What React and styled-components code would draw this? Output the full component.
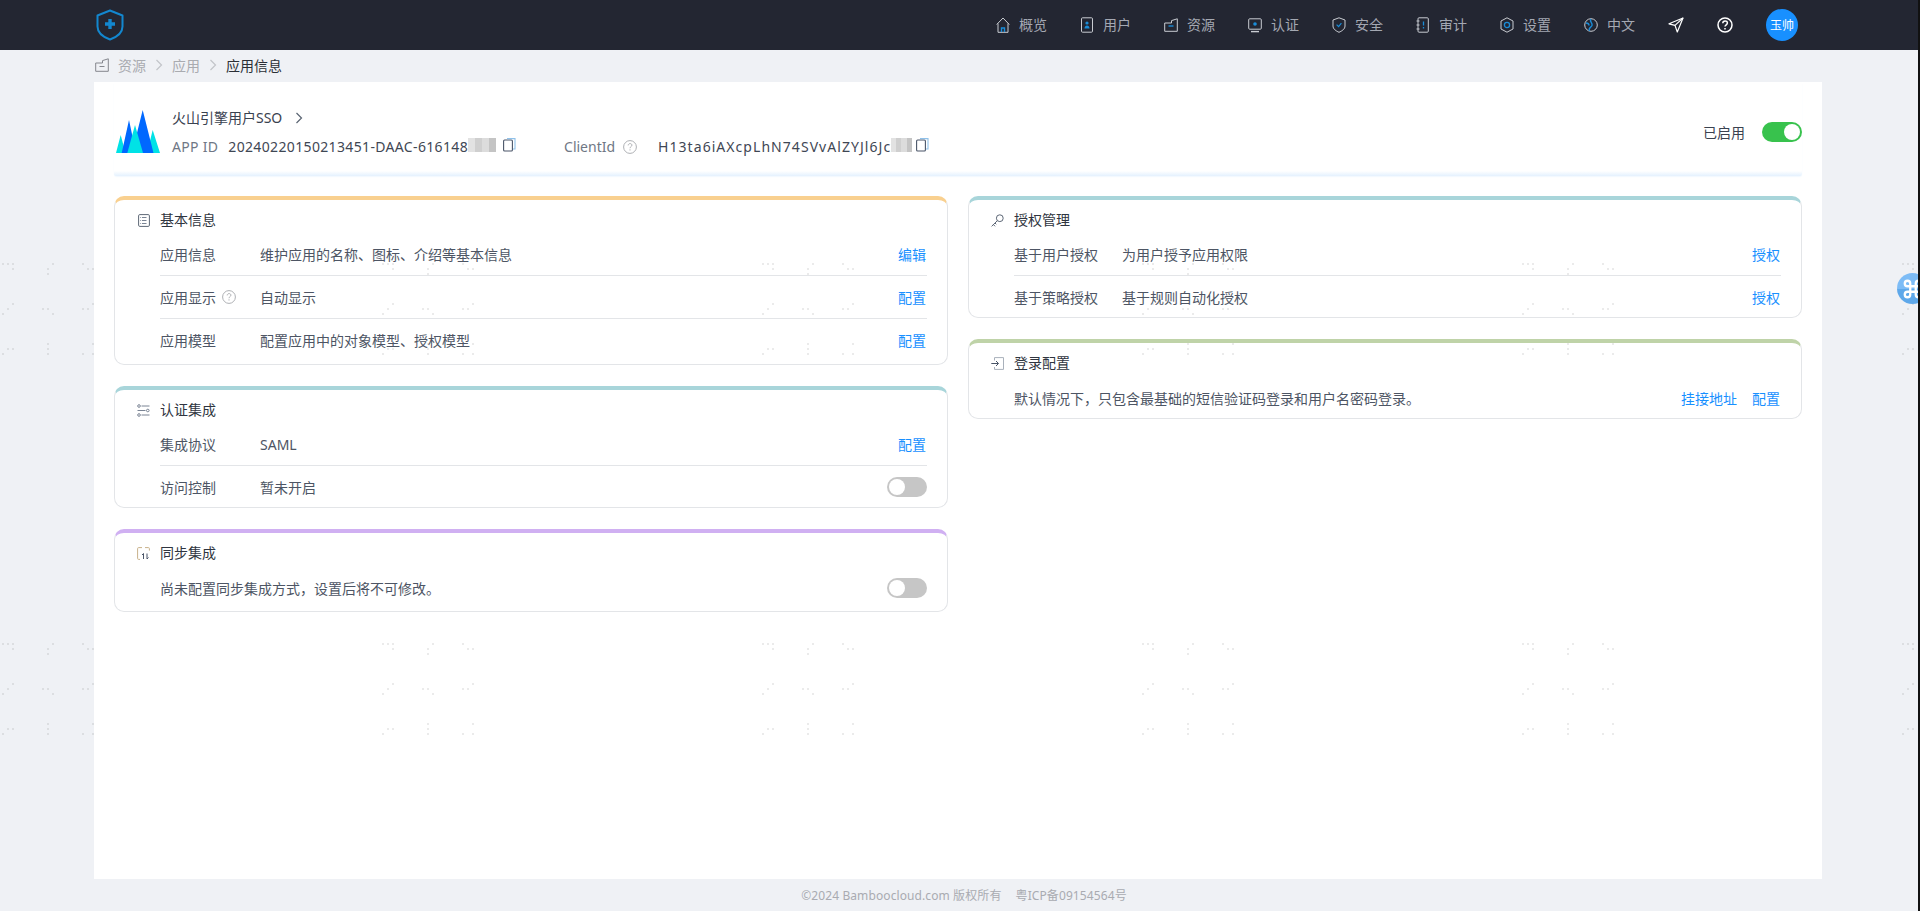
import React from "react";
import styled, { createGlobalStyle } from "styled-components";
import { Command } from "lucide-react";

const FONT = `"Noto Sans", "Noto Sans CJK SC", sans-serif`;
const LINE = "#c9ccd2";
const CORE = "#1a8cd8";

const GlobalStyle = createGlobalStyle`
  html, body {
    margin: 0;
    padding: 0;
    overflow: hidden;
    background: #eff1f5;
    font-family: ${FONT};
    font-size: 14px;
  }
`;

// nav icons, white outline with a small blue core
const HomeIcon = () => (
  <svg width="14" height="16" viewBox="0 0 14 16" fill="none" stroke={LINE}>
    <path d="M.7 7.5 7 1l6.3 6.5M2 6.5v8.8h10V6.5" />
    <path d="M5.5 15v-4h3v4" stroke={CORE} strokeWidth="1.4" />
  </svg>
);
const UserIcon = () => (
  <svg width="14" height="16" viewBox="0 0 14 16" fill="none" stroke={LINE}>
    <rect x="1.5" y=".8" width="11" height="14.4" rx="1" />
    <circle cx="7" cy="6" r="1.6" fill={CORE} stroke="none" />
    <path d="M4.5 11.5c0-4 5-4 5 0z" fill={CORE} stroke="none" />
  </svg>
);
const FolderIcon = () => (
  <svg width="14" height="14" viewBox="0 0 14 14" fill="none" stroke={LINE}>
    <path d="M.7 5v8.3h12.6V.8L7.5 2.6V5z" />
    <path d="M4.5 8h5" stroke={CORE} strokeWidth="1.4" />
  </svg>
);
const MonitorIcon = () => (
  <svg width="14" height="15" viewBox="0 0 14 15" fill="none" stroke={LINE}>
    <rect x=".7" y=".8" width="12.6" height="10.4" rx="1" />
    <path d="M3 13.6h8" strokeWidth="1.4" />
    <circle cx="7" cy="6" r="1.8" fill={CORE} stroke="none" />
  </svg>
);
const ShieldIcon = () => (
  <svg width="14" height="16" viewBox="0 0 14 16" fill="none" stroke={LINE}>
    <path d="M7 .8 13 3v6c0 3-3 5-6 6.300C4 14 1 12 1 9V3z" />
    <path d="m4.600 7.600 2 2 2.800-3.400" stroke={CORE} strokeWidth="1.2" />
  </svg>
);
const AuditIcon = () => (
  <svg width="14" height="16" viewBox="0 0 14 16" fill="none" stroke={LINE}>
    <rect x="2" y=".8" width="10.300" height="14.400" rx="1" />
    <path d="M.5 4h3M.5 8h3M.5 12h3" />
    <path d="M7.500 4.500v4M7.500 10v1.400" stroke={CORE} strokeWidth="1.300" />
  </svg>
);
const GearIcon = () => (
  <svg width="14" height="16" viewBox="0 0 14 16" fill="none" stroke={LINE}>
    <path d="M7 .8 13 4v8l-6 3.200L1 12V4z" strokeLinejoin="round" />
    <circle cx="7" cy="8" r="2.600" stroke={CORE} strokeWidth="1.300" />
  </svg>
);
const GlobeIcon = () => (
  <svg width="14" height="16" viewBox="0 0 14 16" fill="none" stroke={LINE}>
    <circle cx="7" cy="8" r="6.300" />
    <path d="M7 2c-2 3 2 4 1 6.500s-4 2-2.500 5.500M2 6c2 0 3 1 3 2.500" stroke={CORE} strokeWidth="1.400" />
  </svg>
);
const PlaneIcon = () => (
  <svg width="16" height="16" viewBox="0 0 16 16" fill="none" stroke="#fff" strokeWidth="1.200">
    <path d="M15 1 1 6.800l6 1.600L9.300 15z" strokeLinejoin="round" />
    <path d="M15 1 7 8.400" />
  </svg>
);
const HelpIcon = () => (
  <svg width="16" height="16" viewBox="0 0 16 16" fill="none" stroke="#fff" strokeWidth="1.500">
    <circle cx="8" cy="8" r="7" />
    <path d="M5.800 6.200c0-3 4.600-3 4.600-.2 0 1.800-2.400 1.800-2.400 3.600" />
    <path d="M8 11v1.400" />
  </svg>
);
const ShieldLogo = () => (
  <svg width="28" height="32" viewBox="0 0 28 32" fill="none" stroke="#1387cf" strokeWidth="2">
    <path d="M14 1.500 26.500 6.500v11c0 6-5.500 10.500-12.500 13C7 28 1.500 23.500 1.500 17.500v-11z" strokeLinejoin="round" />
    <path d="M14 10v10M9 15h10" strokeWidth="3.400" />
  </svg>
);
const MountainLogo = () => (
  <svg width="44" height="43" viewBox="0 0 44 43">
    <path d="M4.700 25 0 43h9.500zM36.700 20 31 43h13z" fill="#00e2e6" />
    <path d="M13 10 5.700 43H20zM26.700 0 16 43h21.500z" fill="#0068ff" />
    <path d="M19 15 11.300 43H27z" fill="#00e2e6" />
  </svg>
);
const CrumbFolder = () => (
  <svg width="14" height="14" viewBox="0 0 14 14" fill="none" stroke="#85878e">
    <path d="M.7 5v8.300h12.600V.8L7.500 2.600V5z" />
    <path d="M4.500 8.500h5" />
  </svg>
);
const Chevron = ({ color = "#c2c4c9", size = 12 }) => (
  <svg width={size} height={size} viewBox="0 0 12 12" fill="none" stroke={color} strokeWidth="1.200">
    <path d="m3.500 1 5 5-5 5" />
  </svg>
);
const CopyIcon = () => (
  <svg width="13" height="14" viewBox="0 0 13 14" fill="none" stroke="#7d8794" strokeWidth="1.100">
    <rect x=".6" y="2" width="8.800" height="11" rx="1" stroke="#4a5568" />
    <path d="M4 .6h8v10.400h-2" stroke="#8fc1ea" />
  </svg>
);
const Hint = () => (
  <svg width="14" height="14" viewBox="0 0 14 14" fill="none" stroke="#aeb0b4">
    <circle cx="7" cy="7" r="6.400" />
    <path d="M5.200 5.400c0-2.400 3.700-2.400 3.700-.2 0 1.500-1.900 1.400-1.900 3M7 9.300v1.200" />
  </svg>
);

// section title icons
const DocIcon = () => (
  <svg width="12" height="13" viewBox="0 0 12 13" fill="none" stroke="#5d6776">
    <rect x=".6" y=".6" width="10.800" height="11.800" rx="1.200" />
    <path d="M4 3.500h4.500M4 6.500h4.500M4 9.500h4.500M2.300 3.500h.8M2.300 6.500h.8M2.300 9.500h.8" stroke="#7a8494" />
  </svg>
);
const SliderIcon = () => (
  <svg width="13" height="13" viewBox="0 0 13 13" fill="none" stroke="#7a8494">
    <circle cx="2" cy="2" r="1.300" />
    <circle cx="10.800" cy="6.500" r="1.300" />
    <circle cx="2" cy="11" r="1.300" />
    <path d="M4.500 2h8M.5 6.500h8M4.500 11h8" />
  </svg>
);
const SyncIcon = () => (
  <svg width="13" height="13" viewBox="0 0 13 13" fill="none" stroke="#8d96a3">
    <path d="M5 .6H1.600a1 1 0 0 0-1 1v9.800a1 1 0 0 0 1 1H3M8 .6h3.400a1 1 0 0 1 1 1v2" stroke="#c8b18a" />
    <path d="M6.500 12V6.500L5 8M10 6.500V12l1.500-1.500" stroke="#4a5568" />
  </svg>
);
const KeyIcon = () => (
  <svg width="13" height="13" viewBox="0 0 13 13" fill="none" stroke="#5d6776">
    <circle cx="8.800" cy="4.200" r="3.400" />
    <path d="M6.300 6.700.6 12.400M2.400 10.600l1.700 1.700M4 9l1.300 1.300" />
  </svg>
);
const LoginIcon = () => (
  <svg width="13" height="13" viewBox="0 0 13 13" fill="none" stroke="#7a8494">
    <path d="M3.500 3.500V.6h9v11.800h-9V10" stroke="#a9b1bb" />
    <path d="M.3 6.500h7M5 4l2.500 2.500L5 9" stroke="#4a5568" />
  </svg>
);

const Page = styled.div`
  min-height: 100vh;
  display: flex;
  flex-direction: column;
  color: #4d5564;
`;
const Topbar = styled.header`
  height: 50px;
  flex: none;
  background: #232632;
  display: flex;
  align-items: center;
  justify-content: space-between;
  padding: 0 122px 0 96px;
`;
const Nav = styled.nav`
  display: flex;
  align-items: center;
  gap: 33px;
`;
const NavItem = styled.a`
  display: flex;
  align-items: center;
  gap: 9px;
  color: #a4a8b2;
  line-height: 20px;
`;
const NavIconBox = styled.span`
  width: 14px;
  height: 16px;
  display: flex;
  align-items: center;
  justify-content: center;
`;
const Avatar = styled.span`
  width: 32px;
  height: 32px;
  border-radius: 50%;
  background: #1890ff;
  color: #fff;
  font-size: 12px;
  display: flex;
  align-items: center;
  justify-content: center;
`;
const Crumbs = styled.div`
  height: 30px;
  flex: none;
  padding: 0 0 2px 95px;
  display: flex;
  align-items: center;
`;
const CrumbHome = styled.span`
  display: flex;
  margin-right: 9px;
`;
const CrumbLink = styled.span`
  color: ${(p) => (p.$current ? "#2b2f36" : "#a9abb0")};
`;
const CrumbSep = styled.span`
  width: 26px;
  display: flex;
  justify-content: center;
`;
const Main = styled.main`
  flex: 1;
  margin: 0 98px 0 94px;
  padding: 0 20px;
  background: #fff;
`;
const AppHead = styled.section`
  height: 94px;
  display: flex;
  justify-content: space-between;
  background: linear-gradient(180deg, transparent calc(100% - 5px), #e4f1fe 100%);
  box-shadow: 0 1px 2px -1px rgba(24, 144, 255, 0.2);
  border-radius: 0 0 2px 2px;
  margin-bottom: 20px;
`;
const AppInfo = styled.div`
  display: flex;
  gap: 12px;
  padding: 28px 0 0 2px;
`;
const AppText = styled.div`
  margin-top: -2px;
  display: flex;
  flex-direction: column;
  gap: 9px;
`;
const AppName = styled.div`
  display: flex;
  align-items: center;
  gap: 11px;
  line-height: 20px;
  color: #3a4250;
`;
const IdLine = styled.div`
  display: flex;
  align-items: center;
  line-height: 20px;
`;
const IdLabel = styled.span`
  color: #6f7785;
  letter-spacing: 0.3px;
`;
const IdValue = styled.span`
  color: #3f4754;
  margin-left: ${(p) => p.$gap}px;
  letter-spacing: ${(p) => p.$track}px;
`;
const Mosaic = styled.span`
  width: ${(p) => p.$w}px;
  height: 14px;
  margin-top: -4px;
  background: linear-gradient(
    90deg,
    #e2e2e2 0 25%,
    #cfcfcf 25% 50%,
    #dcdcdc 50% 75%,
    #c4c4c4 75% 100%
  );
`;
const CopyBox = styled.span`
  display: flex;
  margin: -4px 0 0 ${(p) => p.$gap}px;
`;
const HintBox = styled.span`
  display: flex;
  margin-left: 8px;
`;
const ClientLabel = styled(IdLabel)`
  margin-left: 48px;
  letter-spacing: 0;
`;
const Status = styled.div`
  display: flex;
  align-items: center;
  gap: 17px;
  height: 20px;
  margin-top: 40px;
  color: #3a4250;
`;
const Toggle = styled.span`
  width: 40px;
  height: 20px;
  border-radius: 10px;
  background: ${(p) => (p.$on ? "#38c24d" : "#c6c6c6")};
  display: flex;
  justify-content: ${(p) => (p.$on ? "flex-end" : "flex-start")};
  align-items: center;
  padding: 0 2px;
  box-sizing: border-box;
  &::after {
    content: "";
    width: 16px;
    height: 16px;
    border-radius: 50%;
    background: #fff;
  }
`;
const Columns = styled.div`
  display: grid;
  grid-template-columns: 834px 834px;
  gap: 20px;
  align-items: start;
`;
const Column = styled.div`
  display: flex;
  flex-direction: column;
  gap: 21px;
`;
const Card = styled.article`
  border: 1px solid #e3e5e8;
  border-top: 4px solid ${(p) => p.$accent};
  border-radius: 10px;
  padding-bottom: ${(p) => p.$pad || 0}px;
`;
const CardTitle = styled.h3`
  margin: 0;
  padding: 10px 0 3px 22px;
  height: 20px;
  display: flex;
  align-items: center;
  gap: 10px;
  font-size: 14px;
  font-weight: 400;
  line-height: 20px;
  color: #2f3540;
`;
const TitleIcon = styled.span`
  width: 13px;
  display: flex;
  justify-content: center;
`;
const CardBody = styled.div`
  padding: 0 20px 0 45px;
`;
const Row = styled.div`
  height: 42px;
  display: flex;
  align-items: center;
  border-bottom: 1px solid #e3e5e8;
  &:last-child {
    height: 41px;
    border-bottom: 0;
  }
`;
const NoteRow = styled.div`
  margin-top: ${(p) => p.$top}px;
  height: ${(p) => p.$h}px;
  display: flex;
  align-items: center;
  justify-content: space-between;
`;
const Label = styled.span`
  width: ${(p) => p.$w}px;
  flex: none;
  display: flex;
  align-items: center;
  gap: 6px;
`;
const Value = styled.span`
  flex: 1;
`;
const Actions = styled.span`
  display: flex;
  gap: 14px;
`;
const Action = styled.a`
  color: #1890ff;
  margin-right: 1px;
`;
const Footer = styled.footer`
  height: 32px;
  flex: none;
  display: flex;
  align-items: center;
  justify-content: center;
  gap: 14px;
  padding-left: 8px;
  font-size: 12px;
  letter-spacing: 0.1px;
  color: #a9abb1;
`;
const FloatBall = styled.span`
  position: fixed;
  top: 273px;
  right: -8px;
  width: 31px;
  height: 31px;
  border-radius: 50%;
  background: linear-gradient(180deg, #7dbcf6 0 50%, #5ea8ea 50% 100%);
  color: #fff;
  display: flex;
  align-items: center;
  justify-content: center;
`;
const WindowEdge = styled.span`
  position: fixed;
  top: 0;
  right: 0;
  bottom: 0;
  width: 2px;
  background: #111;
`;
const WatermarkLayer = styled.svg`
  position: fixed;
  inset: 0;
  width: 100%;
  height: 100%;
  pointer-events: none;
`;

const navItems = [
  ["概览", HomeIcon],
  ["用户", UserIcon],
  ["资源", FolderIcon],
  ["认证", MonitorIcon],
  ["安全", ShieldIcon],
  ["审计", AuditIcon],
  ["设置", GearIcon],
  ["中文", GlobeIcon],
];

// the faint dotted tile that repeats over the page
const dots = [
  [0, 0], [5, 0], [10, 0], [10, 5], [50, 0], [45, 5], [45, 10], [80, 0], [85, 5], [90, 5],
  [10, 40], [5, 45], [0, 50], [40, 45], [45, 45], [50, 50], [80, 45], [85, 45], [90, 40],
  [5, 85], [10, 85], [0, 90], [45, 80], [45, 85], [45, 90], [90, 80], [80, 90], [90, 90],
];

const Watermark = () => (
  <WatermarkLayer>
    <defs>
      <pattern id="wm" x="2" y="263" width="380" height="380" patternUnits="userSpaceOnUse">
        {dots.map(([x, y]) => (
          <rect key={`${x}-${y}`} x={x} y={y} width="2" height="2" fill="rgba(0,0,0,0.08)" />
        ))}
      </pattern>
    </defs>
    <rect width="100%" height="100%" fill="url(#wm)" />
  </WatermarkLayer>
);

const App = () => {
  return (
    <Page>
      <GlobalStyle />
      <Topbar>
        <ShieldLogo />
        <Nav>
          {navItems.map(([text, Icon]) => (
            <NavItem key={text}>
              <NavIconBox>
                <Icon />
              </NavIconBox>
              {text}
            </NavItem>
          ))}
          <PlaneIcon />
          <HelpIcon />
          <Avatar>玉帅</Avatar>
        </Nav>
      </Topbar>

      <Crumbs>
        <CrumbHome>
          <CrumbFolder />
        </CrumbHome>
        <CrumbLink>资源</CrumbLink>
        <CrumbSep>
          <Chevron />
        </CrumbSep>
        <CrumbLink>应用</CrumbLink>
        <CrumbSep>
          <Chevron />
        </CrumbSep>
        <CrumbLink $current>应用信息</CrumbLink>
      </Crumbs>

      <Main>
        <AppHead>
          <AppInfo>
            <MountainLogo />
            <AppText>
              <AppName>
                火山引擎用户SSO
                <Chevron color="#5a6472" />
              </AppName>
              <IdLine>
                <IdLabel>APP ID</IdLabel>
                <IdValue $gap={10} $track={0.35}>20240220150213451-DAAC-616148</IdValue>
                <Mosaic $w={28} />
                <CopyBox $gap={7}>
                  <CopyIcon />
                </CopyBox>
                <ClientLabel>ClientId</ClientLabel>
                <HintBox>
                  <Hint />
                </HintBox>
                <IdValue $gap={21} $track={1.05}>H13ta6iAXcpLhN74SVvAlZYJl6Jc</IdValue>
                <Mosaic $w={21} />
                <CopyBox $gap={4}>
                  <CopyIcon />
                </CopyBox>
              </IdLine>
            </AppText>
          </AppInfo>
          <Status>
            已启用
            <Toggle $on />
          </Status>
        </AppHead>

        <Columns>
          <Column>
            <Card $accent="#f9d08f" $pad={4}>
              <CardTitle>
                <TitleIcon>
                  <DocIcon />
                </TitleIcon>
                基本信息
              </CardTitle>
              <CardBody>
                <Row>
                  <Label $w={100}>应用信息</Label>
                  <Value>维护应用的名称、图标、介绍等基本信息</Value>
                  <Action>编辑</Action>
                </Row>
                <Row>
                  <Label $w={100}>
                    应用显示
                    <Hint />
                  </Label>
                  <Value>自动显示</Value>
                  <Action>配置</Action>
                </Row>
                <Row>
                  <Label $w={100}>应用模型</Label>
                  <Value>配置应用中的对象模型、授权模型</Value>
                  <Action>配置</Action>
                </Row>
              </CardBody>
            </Card>

            <Card $accent="#a8d5da">
              <CardTitle>
                <TitleIcon>
                  <SliderIcon />
                </TitleIcon>
                认证集成
              </CardTitle>
              <CardBody>
                <Row>
                  <Label $w={100}>集成协议</Label>
                  <Value>SAML</Value>
                  <Action>配置</Action>
                </Row>
                <Row>
                  <Label $w={100}>访问控制</Label>
                  <Value>暂未开启</Value>
                  <Toggle />
                </Row>
              </CardBody>
            </Card>

            <Card $accent="#d0b0f2" $pad={2}>
              <CardTitle>
                <TitleIcon>
                  <SyncIcon />
                </TitleIcon>
                同步集成
              </CardTitle>
              <CardBody>
                <NoteRow $top={1} $h={42}>
                  尚未配置同步集成方式，设置后将不可修改。
                  <Toggle />
                </NoteRow>
              </CardBody>
            </Card>
          </Column>

          <Column>
            <Card $accent="#a8d5da">
              <CardTitle>
                <TitleIcon>
                  <KeyIcon />
                </TitleIcon>
                授权管理
              </CardTitle>
              <CardBody>
                <Row>
                  <Label $w={108}>基于用户授权</Label>
                  <Value>为用户授予应用权限</Value>
                  <Action>授权</Action>
                </Row>
                <Row>
                  <Label $w={108}>基于策略授权</Label>
                  <Value>基于规则自动化授权</Value>
                  <Action>授权</Action>
                </Row>
              </CardBody>
            </Card>

            <Card $accent="#bfd3a8" $pad={2}>
              <CardTitle>
                <TitleIcon>
                  <LoginIcon />
                </TitleIcon>
                登录配置
              </CardTitle>
              <CardBody>
                <NoteRow $top={3} $h={37}>
                  默认情况下，只包含最基础的短信验证码登录和用户名密码登录。
                  <Actions>
                    <Action>挂接地址</Action>
                    <Action>配置</Action>
                  </Actions>
                </NoteRow>
              </CardBody>
            </Card>
          </Column>
        </Columns>
      </Main>

      <Footer>
        <span>©2024 Bamboocloud.com 版权所有</span>
        <span>粤ICP备09154564号</span>
      </Footer>

      <Watermark />
      <FloatBall>
        <Command size={22} strokeWidth={2.5} />
      </FloatBall>
      <WindowEdge />
    </Page>
  );
};

export default App;
